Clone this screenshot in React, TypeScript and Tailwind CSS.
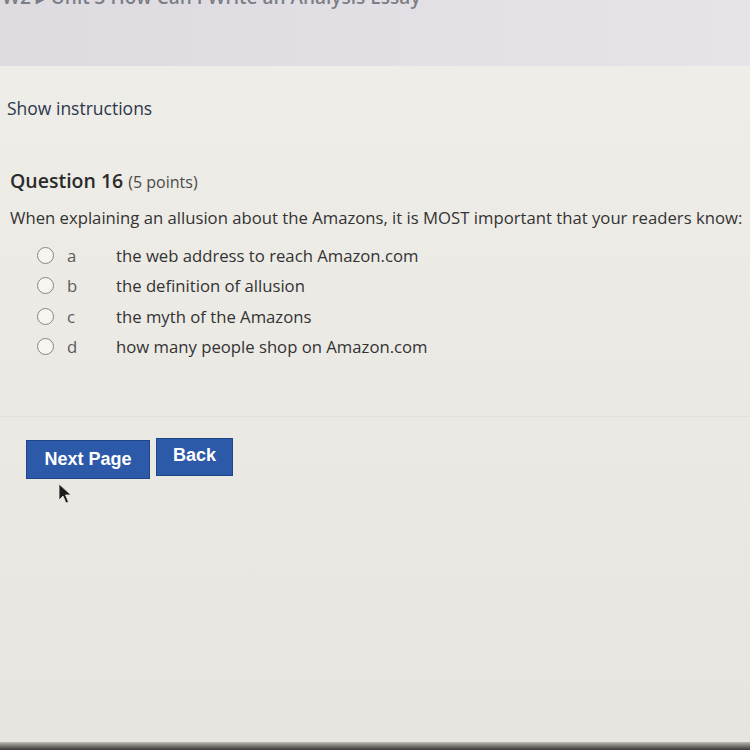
import React from 'react';

const options = [
  { key: 'a', text: 'the web address to reach Amazon.com' },
  { key: 'b', text: 'the definition of allusion' },
  { key: 'c', text: 'the myth of the Amazons' },
  { key: 'd', text: 'how many people shop on Amazon.com' },
];

const Cursor = () => (
  <svg width="16" height="22" viewBox="0 0 16 22" className="absolute left-[58px] top-[66px]">
    <path d="M1 1 L1 17 L5 13 L8 20 L10.5 19 L7.5 12 L13 12 Z" fill="#1c1c1c" stroke="#e8e6e1" strokeWidth="0.8" />
  </svg>
);

export default function App() {
  return (
    <div className="w-[750px] h-[750px] overflow-hidden flex flex-col bg-[#ebe9e4] font-['Open_Sans',sans-serif]">
      <div className="h-[66px] shrink-0 bg-gradient-to-r from-[#dedbe0] to-[#e7e4e9] overflow-hidden">
        <div className="-mt-[17px] pl-[2px] text-[19px] font-semibold text-[#3a3f4a] opacity-60 whitespace-nowrap">
          W2 ▸ Unit 3 How Can I Write an Analysis Essay
        </div>
      </div>
      <div className="flex-1 flex flex-col bg-gradient-to-b from-[#efede8] to-[#e7e5e0]">
        <div className="pl-[7px] pt-[29px] text-[17.5px] font-medium text-[#2b374c]">Show instructions</div>
        <div className="pl-[10px] pt-[45px] text-[#2b2b2b]">
          <div className="flex items-baseline gap-[5px]">
            <span className="text-[19.5px] font-semibold">Question 16</span>
            <span className="text-[16px] text-[#4a4a4a]">(5 points)</span>
          </div>
          <div className="pt-[9px] text-[16.7px] text-[#333]">
            When explaining an allusion about the Amazons, it is MOST important that your readers know:
          </div>
          <div className="pt-[14px] pl-[27px] flex flex-col gap-[7.5px]">
            {options.map((o) => (
              <div key={o.key} className="flex items-center h-[23px] text-[16.7px] text-[#333]">
                <span className="w-[17px] h-[17px] rounded-full border-[1.5px] border-[#858585] bg-[#f6f5f2]" />
                <span className="w-[62px] pl-[13px] text-[#5a5a5a]">{o.key}</span>
                <span>{o.text}</span>
              </div>
            ))}
          </div>
        </div>
        <div className="mt-[58px] border-t border-[#e2e0da]" />
        <div className="relative pl-[26px] pt-[21px] flex items-start gap-[6px] font-['Liberation_Sans',sans-serif]">
          <button className="mt-[2px] w-[124px] h-[39px] bg-[#2c5aa8] text-white text-[18px] font-bold border border-[#1f4589]">
            Next Page
          </button>
          <button className="w-[77px] h-[38px] bg-[#2c5aa8] text-white text-[18px] font-bold border border-[#1f4589] leading-none pb-[4px]">
            Back
          </button>
          <Cursor />
        </div>
        <div className="flex-1" />
        <div className="h-[8px] bg-gradient-to-b from-[#bdbab5] to-[#3a3836]" />
      </div>
    </div>
  );
}
